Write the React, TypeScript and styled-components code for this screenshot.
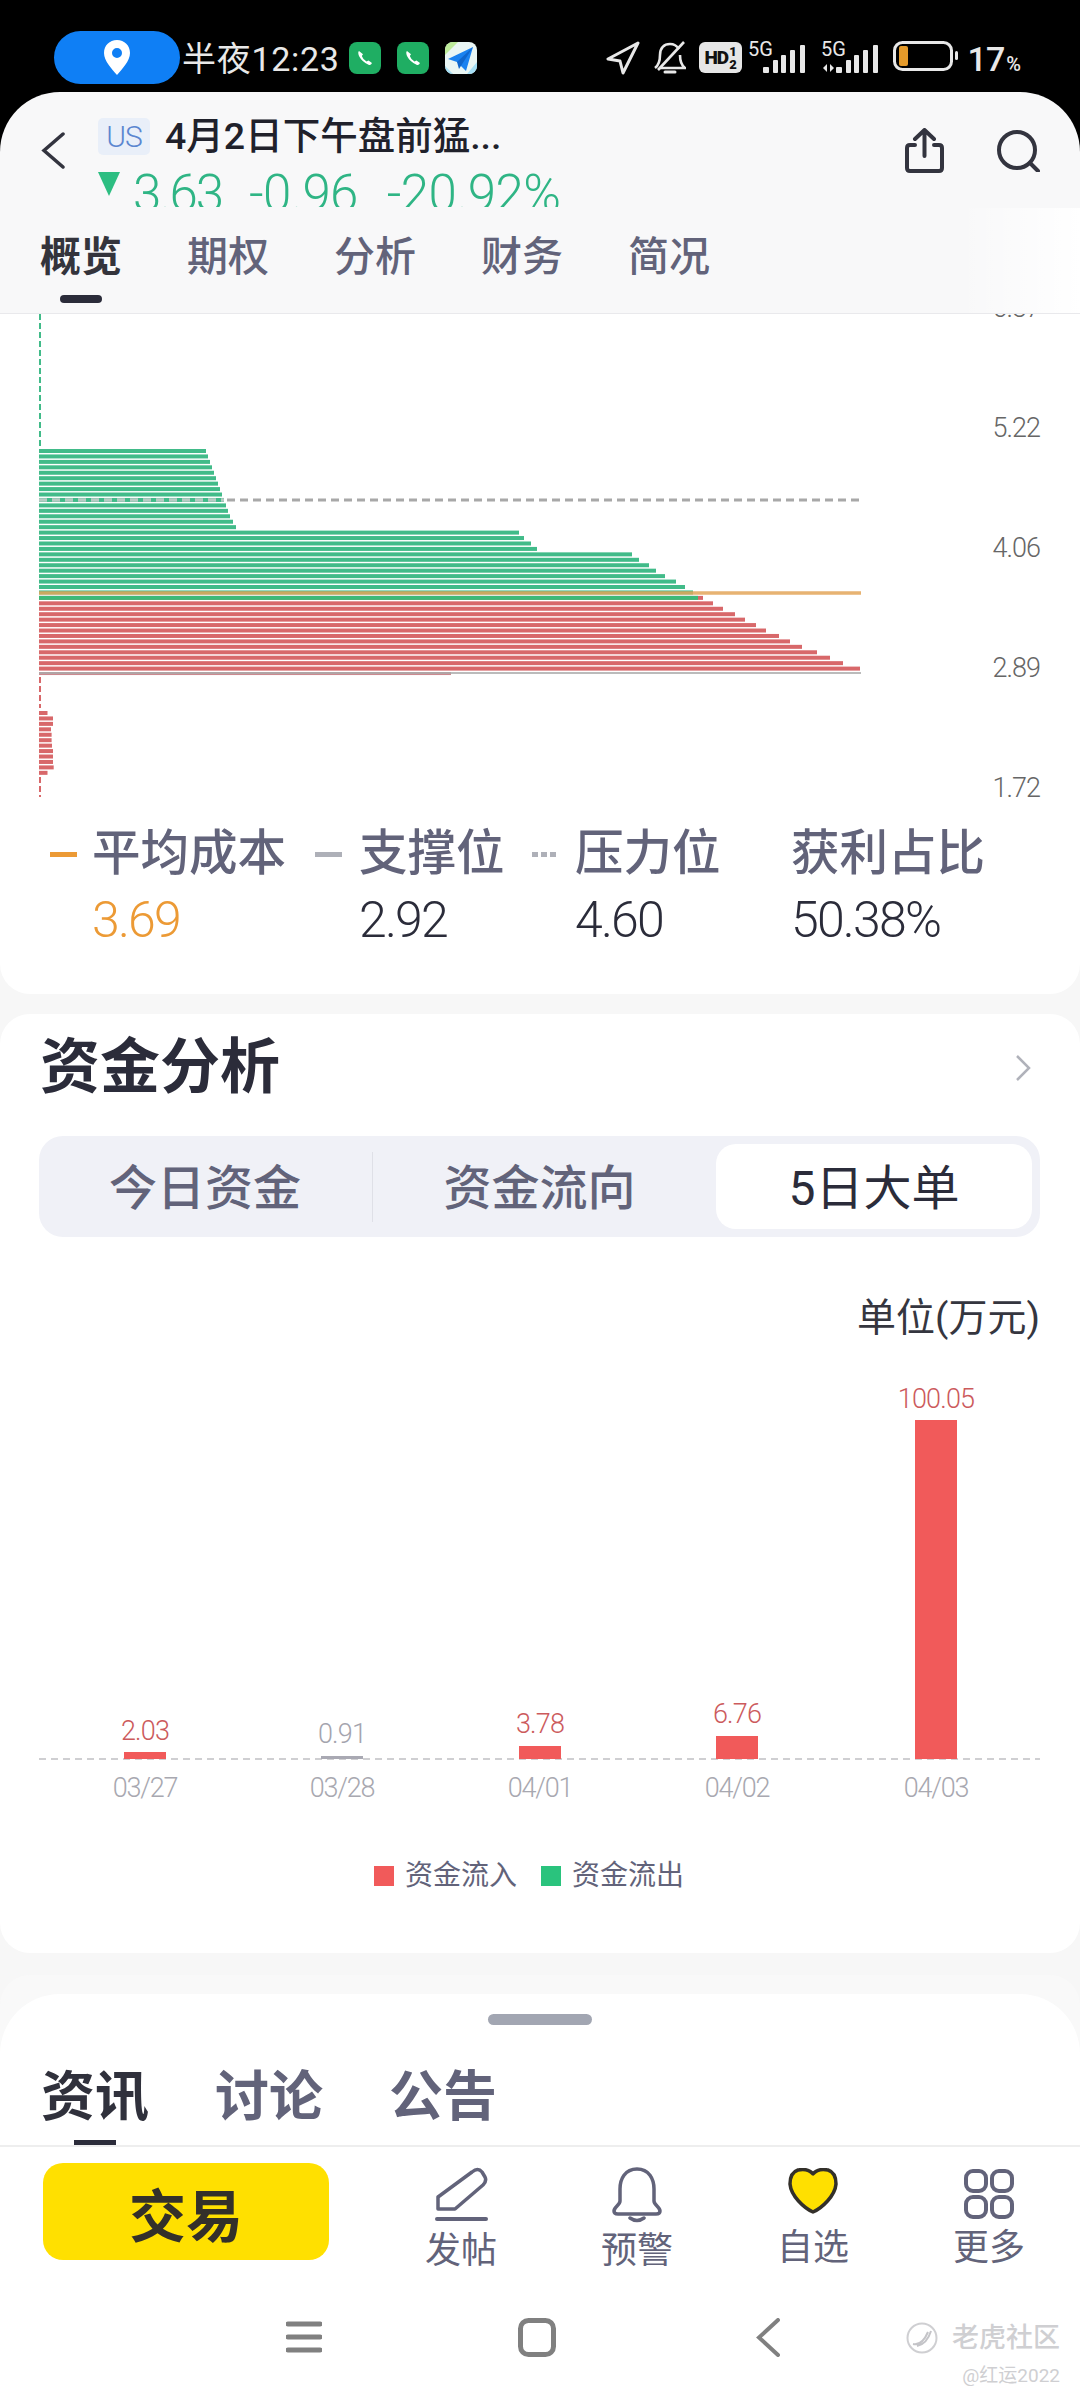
import styled, { createGlobalStyle } from "styled-components";

const SANS = `Roboto, "Noto Sans CJK SC", sans-serif`;
const GREEN = "#41bb89";
const RED = "#d8686a";
const TEXT_DARK = "#2b2c3a";
const TEXT_MID = "#62637a";

// right end of each row of the chip distribution, top to bottom
const GREEN_ROWS = [
  206, 208, 210, 212, 214, 216, 218, 220, 222, 224, 226, 228, 230, 233, 236, 519, 524, 531, 537, 632, 639, 649, 656,
  665, 676, 685, 693,
];
const RED_ROWS = [713, 723, 735, 745, 756, 766, 779, 790, 802, 817, 830, 843, 860];
const LOW_ROWS = [47.5, 53, 53, 51, 51.6, 51.6, 52, 53, 53, 53, 53.7, 47.5];
const ROW_STEP = 5.44;
const ROW_TOP = 449;

const AXIS = [
  { label: "6.37", y: 307 },
  { label: "5.22", y: 427 },
  { label: "4.06", y: 547 },
  { label: "2.89", y: 667 },
  { label: "1.72", y: 787 },
];

const FLOW = [
  { date: "03/27", value: "2.03", x: 145, top: 1752, labelY: 1730, neutral: false },
  { date: "03/28", value: "0.91", x: 342, top: 1756, labelY: 1733, neutral: true },
  { date: "04/01", value: "3.78", x: 540, top: 1746, labelY: 1723, neutral: false },
  { date: "04/02", value: "6.76", x: 737, top: 1736, labelY: 1713, neutral: false },
  { date: "04/03", value: "100.05", x: 936, top: 1420, labelY: 1398, neutral: false },
];

const GlobalStyle = createGlobalStyle`
  html, body {
    margin: 0;
    padding: 0;
    background: #000;
  }
  * {
    box-sizing: border-box;
  }
`;

const Page = styled.div`
  width: 1080px;
  height: 2400px;
  overflow: hidden;
  position: relative;
  display: flex;
  flex-direction: column;
  background: #000;
  font-family: ${SANS};
`;

// Status bar
const StatusBar = styled.div`
  height: 92px;
  flex-shrink: 0;
  padding: 31px 60px 0 54px;
  display: flex;
  justify-content: space-between;
  align-items: flex-start;
  color: #e8e8e8;
`;

const StatusLeft = styled.div`
  display: flex;
  align-items: flex-start;
`;

const LocationPill = styled.div`
  width: 126px;
  height: 53px;
  border-radius: 27px;
  background: #0f7ff5;
  display: flex;
  align-items: center;
  justify-content: center;
`;

const Clock = styled.div`
  width: 167px;
  margin: 11px 0 0 2px;
  font-size: 34px;
  line-height: 34px;
  letter-spacing: 0.7px;
  white-space: nowrap;
`;

const AppIcon = styled.div<{ $bg: string }>`
  width: 32px;
  height: 32px;
  margin: 11px 16px 0 0;
  border-radius: 8px;
  background: ${({ $bg }) => $bg};
  display: flex;
  align-items: center;
  justify-content: center;
  overflow: hidden;
`;

const StatusRight = styled.div`
  display: flex;
  align-items: flex-start;
  padding-top: 10px;
`;

const StatusGlyph = styled.svg<{ $left: number }>`
  display: block;
  margin-left: ${({ $left }) => $left}px;
`;

const HdBadge = styled.div`
  width: 43px;
  height: 31px;
  margin: 1px 0 0 13px;
  border-radius: 6px;
  background: #e6e6e6;
  color: #111;
  display: flex;
  align-items: center;
  justify-content: center;
  gap: 1px;
  font-size: 19px;
  font-weight: 900;
  letter-spacing: -1px;
`;

const HdStack = styled.span`
  display: flex;
  flex-direction: column;
  font-size: 13px;
  line-height: 13px;
`;

const BatteryPercent = styled.div`
  margin: 1px 0 0 10px;
  font-size: 34px;
  line-height: 34px;
  font-weight: 500;
  letter-spacing: -1px;
  white-space: nowrap;

  small {
    font-size: 20px;
    margin-left: 2px;
  }
`;

// Header
const Header = styled.header`
  height: 222px;
  flex-shrink: 0;
  position: relative;
  background: #f8f8f9;
  border-radius: 60px 60px 0 0;
  border-bottom: 1px solid #e9e9ec;
`;

const HeaderTop = styled.div`
  height: 115px;
  overflow: hidden;
  display: flex;
  align-items: flex-start;
  padding: 25px 40px 0 41px;
`;

const BackIcon = styled.svg`
  display: block;
  margin-top: 15px;
  flex-shrink: 0;
`;

const QuoteInfo = styled.div`
  margin-left: 33px;
`;

const TitleRow = styled.div`
  display: flex;
  align-items: center;
  gap: 15px;
`;

const MarketTag = styled.span`
  width: 52px;
  height: 37px;
  border-radius: 5px;
  background: #e9eff9;
  color: #5b86d0;
  font-size: 30px;
  font-weight: 300;
  letter-spacing: -1px;
  display: flex;
  align-items: center;
  justify-content: center;
`;

const StockName = styled.h1`
  margin: 1px 0 0;
  font-size: 37.5px;
  line-height: 37px;
  font-weight: 500;
  color: #20212b;
  white-space: nowrap;
`;

const PriceRow = styled.div`
  margin-top: 17px;
  display: flex;
  align-items: flex-start;
`;

const DownMark = styled.div`
  width: 22px;
  height: 24px;
  flex-shrink: 0;
  background: #2dbe82;
  clip-path: polygon(0 0, 100% 0, 50% 100%);
`;

const PriceValue = styled.span<{ $left: number; $tight?: boolean }>`
  margin-left: ${({ $left }) => $left}px;
  margin-top: -2px;
  font-size: 51px;
  line-height: 48px;
  font-weight: 300;
  letter-spacing: ${({ $tight }) => ($tight ? -2 : -0.6)}px;
  color: #2fb585;
  white-space: nowrap;
`;

const HeaderActions = styled.div`
  margin-left: auto;
  display: flex;
  align-items: flex-start;
  gap: 53px;
`;

const ActionIcon = styled.svg<{ $top: number }>`
  display: block;
  margin-top: ${({ $top }) => $top}px;
`;

const HeaderTabs = styled.nav`
  display: flex;
  align-items: flex-start;
  gap: 65px;
  padding: 30px 0 0 40px;
`;

const HeaderTab = styled.div<{ $active?: boolean }>`
  display: flex;
  flex-direction: column;
  align-items: center;
  font-size: 41px;
  line-height: 41px;
  font-weight: ${({ $active }) => ($active ? 700 : 500)};
  color: ${({ $active }) => ($active ? "#34343c" : TEXT_MID)};
`;

const HeaderTabMark = styled.span`
  width: 42px;
  height: 8px;
  margin-top: 17px;
  border-radius: 4px;
  background: ${TEXT_DARK};
`;

const HeaderFade = styled.div`
  position: absolute;
  right: 0;
  top: 116px;
  width: 120px;
  height: 105px;
  background: linear-gradient(to right, rgba(255, 255, 255, 0), #fff);
`;

// Scrolling content
const Content = styled.main`
  flex: 1;
  background: #f7f7f7;
  display: flex;
  flex-direction: column;
`;

const ChartPanel = styled.section`
  height: 680px;
  flex-shrink: 0;
  background: #fff;
  border-radius: 0 0 30px 30px;
`;

const ChipChart = styled.svg`
  display: block;
`;

const AxisLabel = styled.text`
  font-family: ${SANS};
  font-size: 27px;
  font-weight: 300;
  letter-spacing: -1px;
  fill: #666;
  text-anchor: end;
`;

const CostRow = styled.div`
  display: flex;
  padding: 20px 0 0 50px;
`;

const CostItem = styled.div<{ $width: number; $lead: number }>`
  width: ${({ $width }) => $width}px;
  display: grid;
  grid-template-columns: ${({ $lead }) => $lead}px auto;
  justify-content: start;
  align-items: center;
`;

const CostMark = styled.span<{ $color: string; $dashed?: boolean }>`
  width: 27px;
  height: 5px;
  background: ${({ $color, $dashed }) =>
    $dashed ? `repeating-linear-gradient(to right, ${$color} 0 6px, transparent 6px 9px)` : $color};
`;

const CostLabel = styled.div`
  grid-column: 2;
  margin-left: -2px;
  font-size: 48.5px;
  line-height: 48px;
  font-weight: 500;
  color: ${TEXT_MID};
  white-space: nowrap;
`;

const CostValue = styled.div<{ $color: string }>`
  grid-column: 2;
  margin: 18px 0 0 -2px;
  font-size: 50px;
  line-height: 48px;
  font-weight: 300;
  letter-spacing: -1.8px;
  color: ${({ $color }) => $color};
`;

const FundCard = styled.section`
  height: 939px;
  flex-shrink: 0;
  margin-top: 20px;
  background: #fff;
  border-radius: 30px;
  padding-top: 25px;
`;

const FundTitleRow = styled.div`
  height: 58px;
  display: flex;
  justify-content: space-between;
  align-items: center;
  padding: 0 49px 0 40px;
`;

const FundTitle = styled.h2`
  margin: 0;
  font-size: 60px;
  line-height: 58px;
  font-weight: 700;
  color: ${TEXT_DARK};
`;

const Segments = styled.div`
  height: 101px;
  margin: 39px 40px 0 39px;
  padding: 8px;
  border-radius: 24px;
  background: #f0f1f7;
  display: flex;
  align-items: stretch;
`;

const Segment = styled.div<{ $width: number; $active?: boolean; $divider?: boolean }>`
  width: ${({ $width }) => $width}px;
  padding: 0 ${({ $active }) => ($active ? 0 : 10)}px 6px 0;
  border-radius: 20px;
  background: ${({ $active }) => ($active ? "#fff" : "transparent")};
  color: ${({ $active }) => ($active ? TEXT_DARK : TEXT_MID)};
  font-size: 48px;
  font-weight: ${({ $active }) => ($active ? 400 : 500)};
  display: flex;
  align-items: center;
  justify-content: center;
  position: relative;

  ${({ $divider }) =>
    $divider &&
    `
    &::after {
      content: "";
      position: absolute;
      right: 0;
      top: 8px;
      bottom: 7px;
      width: 1px;
      background: #dfe0e7;
    }
  `}
`;

const UnitLabel = styled.div`
  margin-top: 62px;
  padding-right: 40px;
  text-align: right;
  font-size: 39px;
  line-height: 38px;
  color: #35363f;
`;

const FlowChart = styled.svg`
  display: block;
`;

const FlowValue = styled.text<{ $neutral: boolean }>`
  font-family: ${SANS};
  font-size: 27px;
  font-weight: 300;
  letter-spacing: -0.8px;
  text-anchor: middle;
  fill: ${({ $neutral }) => ($neutral ? "#a4a4ae" : "#cc5a5c")};
`;

const FlowDate = styled.text`
  font-family: ${SANS};
  font-size: 27px;
  font-weight: 300;
  letter-spacing: -1.2px;
  text-anchor: middle;
  fill: #a8a8b0;
`;

const FlowLegend = styled.div`
  display: flex;
  align-items: center;
  padding: 61px 0 0 374px;
`;

const FlowSwatch = styled.span<{ $color: string }>`
  width: 20px;
  height: 20px;
  margin-right: 11px;
  background: ${({ $color }) => $color};
`;

const FlowLegendText = styled.span`
  width: 136px;
  font-size: 28px;
  line-height: 32px;
  color: ${TEXT_MID};
`;

// Bottom sheet
const SheetBack = styled.div`
  margin-top: 22px;
  padding-top: 19px;
  border-radius: 30px 30px 0 0;
  background: #f9f9f9;
  flex-shrink: 0;
`;

const Sheet = styled.section`
  height: 153px;
  background: #fff;
  border-radius: 60px 60px 0 0;
  border-bottom: 2px solid #eeeeee;
  padding-top: 20px;
`;

const SheetHandle = styled.div`
  width: 104px;
  height: 11px;
  margin: 0 auto;
  border-radius: 6px;
  background: #a2a6b2;
`;

const SheetTabs = styled.div`
  display: flex;
  align-items: flex-start;
  gap: 66px;
  margin-top: 47px;
  padding-left: 41px;
`;

const SheetTab = styled.div<{ $active?: boolean }>`
  display: flex;
  flex-direction: column;
  align-items: center;
  font-size: 54px;
  line-height: 52px;
  font-weight: 700;
  color: ${({ $active }) => ($active ? "#30313c" : TEXT_MID)};
`;

const SheetTabMark = styled.span`
  width: 42px;
  height: 5px;
  margin-top: 16px;
  background: ${TEXT_DARK};
`;

const Toolbar = styled.div`
  height: 143px;
  flex-shrink: 0;
  background: #fff;
  display: flex;
  align-items: flex-start;
  padding: 16px 0 0 43px;
`;

const TradeButton = styled.button`
  width: 286px;
  height: 97px;
  margin-right: 44px;
  border: 0;
  border-radius: 20px;
  background: #ffe000;
  color: #33302a;
  font-family: ${SANS};
  font-size: 57px;
  font-weight: 700;
`;

const ToolItem = styled.div<{ $top: number; $labelTop: number }>`
  width: 176px;
  padding-top: ${({ $top }) => $top}px;
  display: flex;
  flex-direction: column;
  align-items: center;
  font-size: 36px;
  line-height: 36px;
  color: ${TEXT_MID};

  svg {
    display: block;
    margin-bottom: ${({ $labelTop }) => $labelTop}px;
  }
`;

const SystemNav = styled.div`
  flex: 1;
  background: #fff;
  display: flex;
  align-items: flex-start;
  padding: 28px 0 0 286px;
`;

const SystemGlyph = styled.svg<{ $gap: number }>`
  display: block;
  margin-right: ${({ $gap }) => $gap}px;
`;

const Watermark = styled.div`
  position: absolute;
  right: 20px;
  top: 2322px;
  display: flex;
  flex-direction: column;
  align-items: flex-end;
  gap: 12px;
  color: #cfcfd2;
`;

const WatermarkBrand = styled.div`
  display: flex;
  align-items: center;
  gap: 14px;
  font-size: 27px;
  line-height: 32px;
  font-weight: 500;
`;

const WatermarkUser = styled.div`
  font-size: 19px;
  line-height: 20px;
`;

function PhoneGlyph() {
  return (
    <svg width="18" height="18" viewBox="0 0 18 18">
      <path d="M3 2 Q1.5 3 3 7 Q6 13 13 16 Q15 16.5 16 14 L12.5 11.5 L10.5 12.5 Q7 10.5 5.8 7 L7 5.2 Z" fill="#fff" />
    </svg>
  );
}

function Signal({ transfer }: { transfer?: boolean }) {
  return (
    <StatusGlyph $left={transfer ? 15 : 6} width="58" height="34" viewBox="0 0 58 34">
      <text x="0" y="15" fontFamily="Roboto, sans-serif" fontSize="20" fill="#e8e8e8">
        5G
      </text>
      {transfer && <path d="M2 27 L6 23 V31 Z M9 23 L13 27 L9 31 Z" fill="#e8e8e8" />}
      <rect x="15" y="26" width="6" height="6" rx="1" fill="#e8e8e8" />
      <rect x="25" y="19" width="5" height="13" rx="1" fill="#e8e8e8" />
      <rect x="33" y="14" width="5" height="18" rx="1" fill="#e8e8e8" />
      <rect x="42" y="9" width="5" height="23" rx="1" fill="#e8e8e8" />
      <rect x="52" y="4" width="5" height="28" rx="1" fill="#e8e8e8" />
    </StatusGlyph>
  );
}

function DistributionBars() {
  const rowY = (i: number) => ROW_TOP + i * ROW_STEP;
  return (
    <>
      {GREEN_ROWS.map((end, i) => (
        <rect key={`g${i}`} x="39" y={rowY(i)} width={end - 39} height="4" fill={GREEN} />
      ))}
      <rect x="39" y={rowY(27)} width={703 - 39} height="4" fill={RED} />
      <rect x="39" y={rowY(27)} width={698 - 39} height="4" fill="#3dba78" />
      {RED_ROWS.map((end, i) => (
        <rect key={`r${i}`} x="39" y={rowY(28 + i)} width={end - 39} height="4" fill={RED} />
      ))}
      <rect x="39" y={rowY(41)} width={451 - 39} height="3" fill="#cc8a90" />
      {LOW_ROWS.map((end, i) => (
        <rect key={`l${i}`} x="39" y={711 + i * ROW_STEP} width={end - 39} height="4" fill={RED} />
      ))}
    </>
  );
}

export default function App() {
  return (
    <Page>
      <GlobalStyle />
      <StatusBar>
        <StatusLeft>
          <LocationPill>
            <svg width="26" height="35" viewBox="0 0 26 35">
              <path
                fillRule="evenodd"
                d="M13 0 C5.5 0 0 5.5 0 13 C0 21 8 29 13 35 C18 29 26 21 26 13 C26 5.5 20.5 0 13 0 Z M13 8 A5 5 0 1 1 13 18 A5 5 0 1 1 13 8 Z"
                fill="#fff"
              />
            </svg>
          </LocationPill>
          <Clock>半夜12:23</Clock>
          <AppIcon $bg="#1fae63">
            <PhoneGlyph />
          </AppIcon>
          <AppIcon $bg="#1fae63">
            <PhoneGlyph />
          </AppIcon>
          <AppIcon $bg="#eaf6f4">
            <svg width="32" height="32" viewBox="0 0 32 32">
              <path d="M0 0 H13 L0 13 Z" fill="#bdeb9a" />
              <path d="M0 32 V24 L8 32 Z M32 32 H22 L32 20 Z" fill="#a5dff5" />
              <path d="M28 5 L3 17 L12 20 L21 29 Z" fill="#1a82f0" />
              <path d="M28 5 L12 20 L14 27 Z" fill="#0f66cc" />
            </svg>
          </AppIcon>
        </StatusLeft>
        <StatusRight>
          <StatusGlyph $left={0} width="34" height="34" viewBox="0 0 34 34">
            <path d="M32 2 L2 18 L14 20 L17 32 Z" fill="none" stroke="#e8e8e8" strokeWidth="3" strokeLinejoin="round" />
          </StatusGlyph>
          <StatusGlyph $left={14} width="32" height="34" viewBox="0 0 32 34">
            <path
              d="M1 27 C5 24 6 20 6 14 C6 7 10 3 16 3 C20 3 23 5 25 8 M26 14 C26 20 27 24 31 27 H6"
              fill="none"
              stroke="#e8e8e8"
              strokeWidth="2.6"
            />
            <path d="M4 29 L30 1" stroke="#e8e8e8" strokeWidth="2.6" />
            <path d="M11 31 H21" stroke="#e8e8e8" strokeWidth="3" strokeLinecap="round" />
          </StatusGlyph>
          <HdBadge>
            HD
            <HdStack>
              <span>1</span>
              <span>2</span>
            </HdStack>
          </HdBadge>
          <Signal />
          <Signal transfer />
          <StatusGlyph $left={14} width="65" height="30" viewBox="0 0 65 30">
            <rect x="1.5" y="1.5" width="57" height="27" rx="8" fill="none" stroke="#e8e8e8" strokeWidth="3" />
            <rect x="6" y="5" width="9" height="20" rx="2" fill="#e49a2a" />
            <rect x="62" y="10" width="3" height="9" rx="1.5" fill="#e8e8e8" />
          </StatusGlyph>
          <BatteryPercent>
            17<small>%</small>
          </BatteryPercent>
        </StatusRight>
      </StatusBar>

      <Header>
        <HeaderTop>
          <BackIcon width="24" height="37" viewBox="0 0 24 37">
            <path d="M22 2 L3 18.5 L22 35" fill="none" stroke="#33343f" strokeWidth="3.5" strokeLinecap="round" />
          </BackIcon>
          <QuoteInfo>
            <TitleRow>
              <MarketTag>US</MarketTag>
              <StockName>4月2日下午盘前猛...</StockName>
            </TitleRow>
            <PriceRow>
              <DownMark />
              <PriceValue $left={13} $tight>
                3.63
              </PriceValue>
              <PriceValue $left={27}>-0.96</PriceValue>
              <PriceValue $left={29}>-20.92%</PriceValue>
            </PriceRow>
          </QuoteInfo>
          <HeaderActions>
            <ActionIcon $top={11} width="39" height="45" viewBox="0 0 39 45">
              <path
                d="M10 17 H5 Q2 17 2 20 V40 Q2 43 5 43 H34 Q37 43 37 40 V20 Q37 17 34 17 H29 M19.5 28 V3 M10 11 L19.5 2 L29 11"
                fill="none"
                stroke="#33343f"
                strokeWidth="4"
                strokeLinecap="round"
                strokeLinejoin="round"
              />
            </ActionIcon>
            <ActionIcon $top={13} width="43" height="42" viewBox="0 0 43 42">
              <circle cx="20" cy="20" r="18" fill="none" stroke="#33343f" strokeWidth="4" />
              <path d="M33 33 L41 41" stroke="#33343f" strokeWidth="4" strokeLinecap="round" />
            </ActionIcon>
          </HeaderActions>
        </HeaderTop>
        <HeaderTabs>
          <HeaderTab $active>
            概览
            <HeaderTabMark />
          </HeaderTab>
          <HeaderTab>期权</HeaderTab>
          <HeaderTab>分析</HeaderTab>
          <HeaderTab>财务</HeaderTab>
          <HeaderTab>简况</HeaderTab>
        </HeaderTabs>
        <HeaderFade />
      </Header>

      <Content>
        <ChartPanel>
          <ChipChart width="1080" height="496" viewBox="0 314 1080 496">
            <DistributionBars />
            <path d="M40 314 V447" stroke={GREEN} strokeWidth="2" strokeDasharray="6 3" />
            <path d="M40 677 V708 M40 777 V797" stroke={RED} strokeWidth="2" strokeDasharray="6 3" />
            <path d="M39 500 H224" stroke="#b7cbc3" strokeWidth="3.5" strokeDasharray="8 5" />
            <path d="M227 500 H861" stroke="#a8a8a8" strokeWidth="3" strokeDasharray="8 5" />
            <path d="M39 593 H861" stroke="#e3a65a" strokeWidth="3.5" opacity="0.85" />
            <path d="M39 673 H861" stroke="#ababab" strokeWidth="2" opacity="0.8" />
            {AXIS.map(({ label, y }) => (
              <AxisLabel key={label} x="1040" y={y + 10}>
                {label}
              </AxisLabel>
            ))}
          </ChipChart>
          <CostRow>
            <CostItem $width={265} $lead={44}>
              <CostMark $color="#ec9a35" />
              <CostLabel>平均成本</CostLabel>
              <CostValue $color="#ec9a35">3.69</CostValue>
            </CostItem>
            <CostItem $width={217} $lead={46}>
              <CostMark $color="#aeb0b8" />
              <CostLabel>支撑位</CostLabel>
              <CostValue $color={TEXT_DARK}>2.92</CostValue>
            </CostItem>
            <CostItem $width={261} $lead={45}>
              <CostMark $color="#aeb0b8" $dashed />
              <CostLabel>压力位</CostLabel>
              <CostValue $color={TEXT_DARK}>4.60</CostValue>
            </CostItem>
            <CostItem $width={240} $lead={0}>
              <CostLabel>获利占比</CostLabel>
              <CostValue $color={TEXT_DARK}>50.38%</CostValue>
            </CostItem>
          </CostRow>
        </ChartPanel>

        <FundCard>
          <FundTitleRow>
            <FundTitle>资金分析</FundTitle>
            <svg width="16" height="26" viewBox="0 0 16 26">
              <path d="M2 1 L14 13 L2 25" fill="none" stroke="#b0b2ba" strokeWidth="2.5" />
            </svg>
          </FundTitleRow>
          <Segments>
            <Segment $width={326} $divider>
              今日资金
            </Segment>
            <Segment $width={343}>资金流向</Segment>
            <Segment $width={316} $active>
              5日大单
            </Segment>
          </Segments>
          <UnitLabel>单位(万元)</UnitLabel>
          <FlowChart width="1080" height="462" viewBox="0 1337 1080 462">
            <path d="M39 1759 H1040" stroke="#cfcfd2" strokeWidth="2" strokeDasharray="7 5" />
            {FLOW.map(({ date, value, x, top, labelY, neutral }) => (
              <g key={date}>
                <rect x={x - 21} y={top} width="42" height={1759 - top} fill={neutral ? "#a9a9b3" : "#f15a5a"} />
                <FlowValue $neutral={neutral} x={x} y={labelY + 10}>
                  {value}
                </FlowValue>
                <FlowDate x={x} y={1797}>
                  {date}
                </FlowDate>
              </g>
            ))}
          </FlowChart>
          <FlowLegend>
            <FlowSwatch $color="#f15a5a" />
            <FlowLegendText>资金流入</FlowLegendText>
            <FlowSwatch $color="#2ac37d" />
            <FlowLegendText>资金流出</FlowLegendText>
          </FlowLegend>
        </FundCard>

        <SheetBack>
          <Sheet>
            <SheetHandle />
            <SheetTabs>
              <SheetTab $active>
                资讯
                <SheetTabMark />
              </SheetTab>
              <SheetTab>讨论</SheetTab>
              <SheetTab>公告</SheetTab>
            </SheetTabs>
          </Sheet>
        </SheetBack>

        <Toolbar>
          <TradeButton>交易</TradeButton>
          <ToolItem $top={4} $labelTop={11}>
            <svg width="53" height="55" viewBox="0 0 53 55">
              <path
                d="M3 42 V30 L37 5 Q43 0 47 5 L50 10 Q52 14 48 18 L20 42 Z"
                fill="none"
                stroke={TEXT_MID}
                strokeWidth="3.5"
                strokeLinejoin="round"
              />
              <path d="M2 52 H51" stroke={TEXT_MID} strokeWidth="4" strokeLinecap="round" />
            </svg>
            发帖
          </ToolItem>
          <ToolItem $top={4} $labelTop={10}>
            <svg width="50" height="56" viewBox="0 0 50 56">
              <path
                d="M25 2 C13 2 8 12 8 22 V34 C8 38 2 40 2 44 Q2 47 6 47 H44 Q48 47 48 44 C48 40 42 38 42 34 V22 C42 12 37 2 25 2 Z"
                fill="none"
                stroke={TEXT_MID}
                strokeWidth="3.5"
              />
              <path d="M18 51 Q25 56 32 51" fill="none" stroke={TEXT_MID} strokeWidth="3.5" strokeLinecap="round" />
            </svg>
            预警
          </ToolItem>
          <ToolItem $top={5} $labelTop={16}>
            <svg width="50" height="46" viewBox="0 0 50 46">
              <path
                d="M25 6 C21 1 15 1 10 2 C4 4 2 10 2 16 C3 28 16 40 25 44 C34 40 47 28 48 16 C48 10 46 4 40 2 C35 1 29 1 25 6 Z"
                fill="#ffe000"
                stroke="#33302a"
                strokeWidth="3.5"
                strokeLinejoin="round"
              />
            </svg>
            自选
          </ToolItem>
          <ToolItem $top={6} $labelTop={11}>
            <svg width="50" height="50" viewBox="0 0 50 50">
              <rect x="2" y="2" width="20" height="20" rx="7" fill="none" stroke={TEXT_MID} strokeWidth="4" />
              <rect x="28" y="2" width="20" height="20" rx="7" fill="none" stroke={TEXT_MID} strokeWidth="4" />
              <rect x="2" y="28" width="20" height="20" rx="7" fill="none" stroke={TEXT_MID} strokeWidth="4" />
              <rect x="28" y="28" width="20" height="20" rx="7" fill="none" stroke={TEXT_MID} strokeWidth="4" />
            </svg>
            更多
          </ToolItem>
        </Toolbar>

        <SystemNav>
          <SystemGlyph $gap={196} width="36" height="38" viewBox="0 0 36 38">
            <path d="M2 6 H34 M2 19 H34 M2 32 H34" stroke="#808080" strokeWidth="5" strokeLinecap="round" />
          </SystemGlyph>
          <SystemGlyph $gap={200} width="38" height="39" viewBox="0 0 38 39">
            <rect x="2.5" y="2.5" width="33" height="34" rx="8" fill="none" stroke="#808080" strokeWidth="5" />
          </SystemGlyph>
          <SystemGlyph $gap={0} width="24" height="39" viewBox="0 0 24 39">
            <path d="M22 2 L3 19.5 L22 37" fill="none" stroke="#808080" strokeWidth="4" strokeLinecap="round" />
          </SystemGlyph>
        </SystemNav>
      </Content>

      <Watermark>
        <WatermarkBrand>
          <svg width="32" height="32" viewBox="0 0 32 32">
            <circle cx="16" cy="16" r="14.5" fill="none" stroke="#cfcfd2" strokeWidth="2" />
            <path d="M7 22 Q16 24 22 10 M11 24 Q21 22 25 9" fill="none" stroke="#c4c4c8" strokeWidth="2" />
          </svg>
          老虎社区
        </WatermarkBrand>
        <WatermarkUser>@红运2022</WatermarkUser>
      </Watermark>
    </Page>
  );
}
